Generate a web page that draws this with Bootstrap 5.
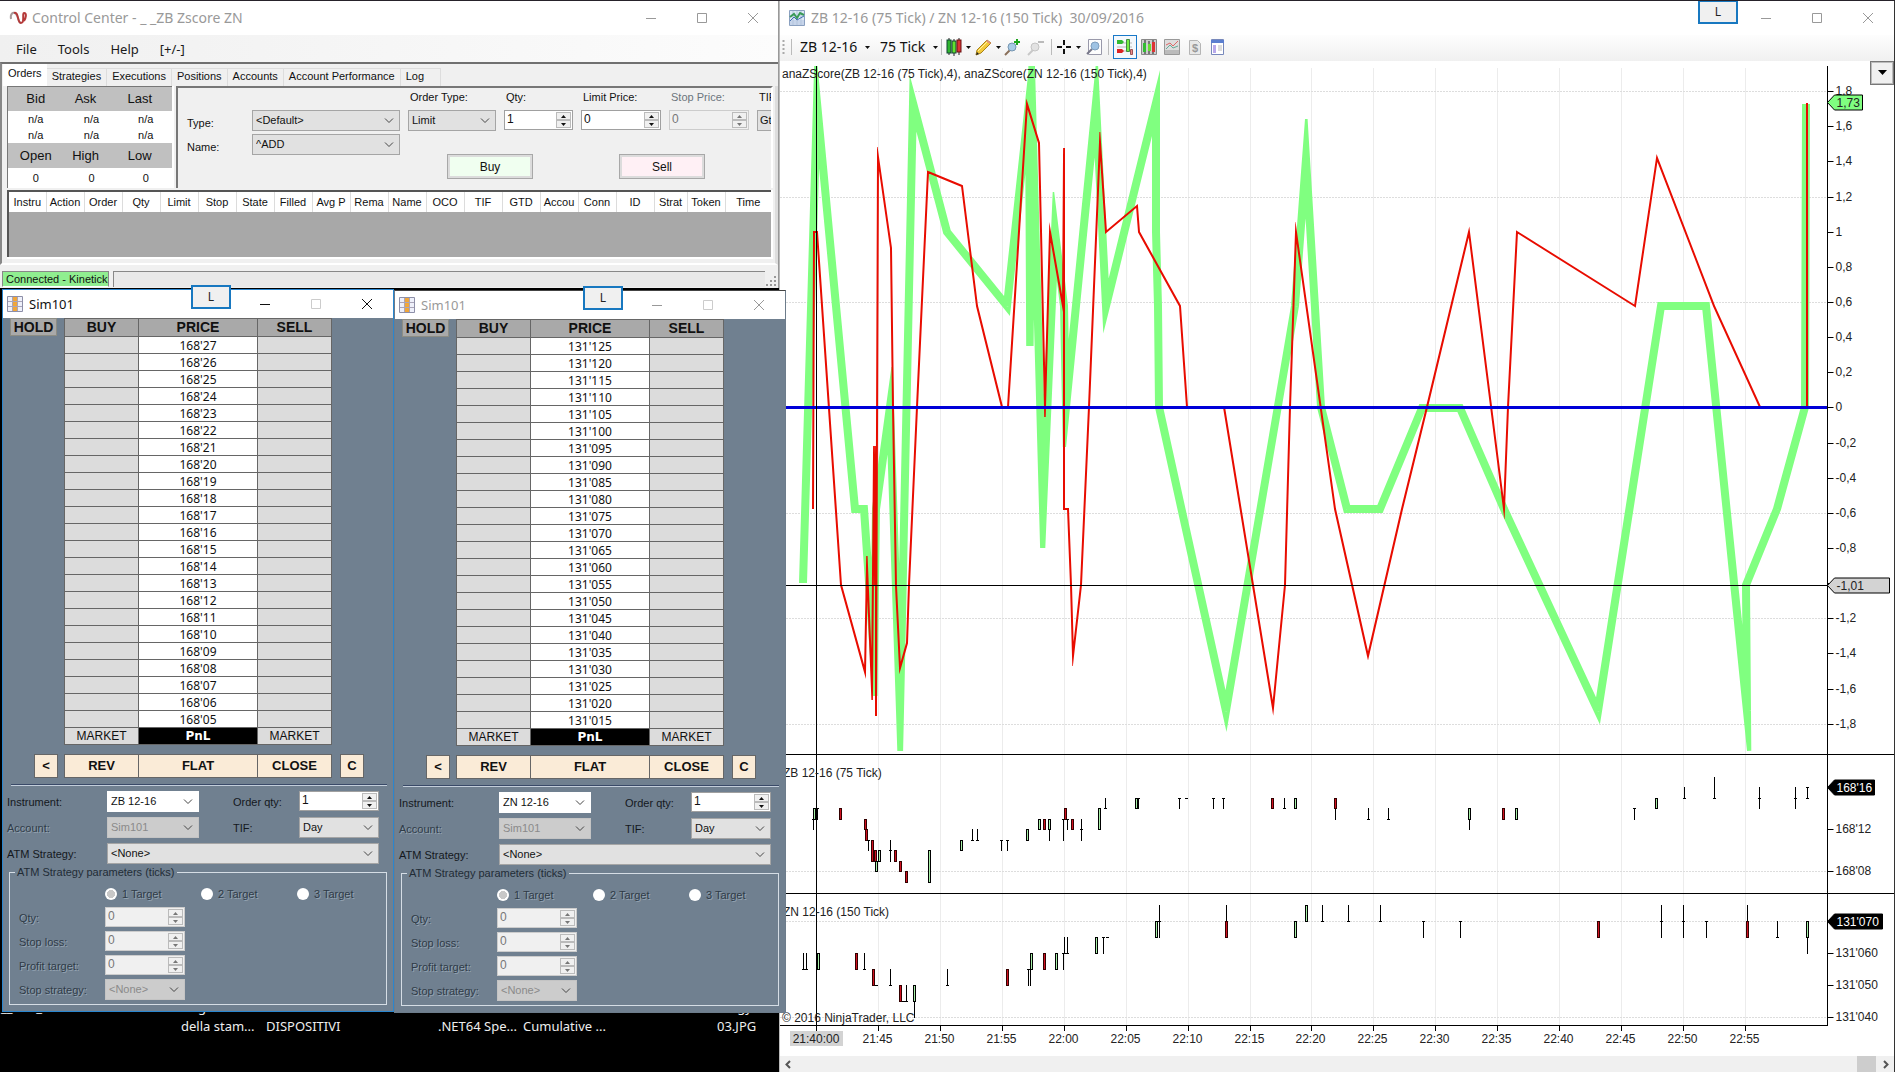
<!DOCTYPE html>
<html lang="en">
<head>
<meta charset="utf-8">
<meta name="viewport" content="width=device-width, initial-scale=1">
<title>NinjaTrader workspace</title>
<link rel="stylesheet" href="https://cdn.jsdelivr.net/npm/bootstrap@5.3.0/dist/css/bootstrap.min.css">
<style>
:root{--ui:"Liberation Sans",Arial,sans-serif;--seg:"Noto Sans","Open Sans",sans-serif}
body{font-family:var(--ui);font-size:11px;line-height:16px;color:#111;background:#000}
button,input,select{font:inherit;color:inherit}
.desktop{height:100vh;min-height:1072px;background:#000;border-top:1px solid #26222a}
.leftside{width:779px}
/* windows */
.titlebar{height:34px;font-family:var(--seg);font-size:14px;color:#999;background:#fff;padding-left:9px}
.winbtn{width:51px;height:28px;border:0;background:none;padding:0;color:#999;display:flex;align-items:center;justify-content:center}
.lchip{position:absolute;width:40px;height:24px;border:2px solid #1878c0;background:#f0f0f0;font-family:var(--seg);font-size:12px;line-height:18px;color:#222;padding:0;z-index:6}
/* control center */
.cc{background:#f0f0f0;height:287px;border-right:1px solid #999}
.menubar{height:27px;background:linear-gradient(90deg,#f0f0f0,#fcfcfc);font-family:var(--seg);font-size:13px;gap:21px;padding-left:16px}
.menubar a{color:#1a1a1a;text-decoration:none}
.cctabs{border-top:2px solid #707070;height:24px;padding-left:1px;border-left:2px solid #888;flex-wrap:nowrap}
.cctabs .nav-link{height:18px;padding:0 5px;border:1px solid #ddd;border-left:0;border-bottom:0;border-radius:0;color:#111;line-height:15px;white-space:nowrap;background:#f0f0f0;text-align:center}
.cctabs .nav-link.active{height:22px;background:#fff;line-height:18px;border:0}
.ccpage{border-left:2px solid #888;border-right:3px solid #ddd;border-bottom:2px solid #fff;padding:0 2px 4px 5px}
.quoterow{gap:2px}
.quotes{width:167px;table-layout:fixed;border:1px solid #777;border-right:2px solid #fff;border-bottom:0;background:#fff;margin:0;text-align:center}
.quotes th{background:#c0c0c0;font-weight:400;font-size:13px;height:24px;padding:0}
.quotes th+th{padding-right:12px}
.quotes td{padding:0;height:16px}
.quotes tr.lastrow td{height:20px}
.orderpane{border-left:2px solid #777;border-top:2px solid #777;border-right:2px solid #fff;height:102px;overflow:hidden;padding-left:9px;min-width:0}
.tplrow label{width:65px;padding-top:5px}
.tplrow select{width:148px}
.fld{height:21px;border:1px solid #a5a5a5;border-radius:0;background-color:#e1e1e1;padding:0 18px 0 3px;font-size:11px;line-height:17px;appearance:none;
 background-image:url("data:image/svg+xml,%3Csvg xmlns='http://www.w3.org/2000/svg' width='10' height='6'%3E%3Cpath d='M1 .5l4 4 4-4' fill='none' stroke='%23444'/%3E%3C/svg%3E");background-repeat:no-repeat;background-position:right 5px center;color:#111}
.fld.white{background-color:#fff;border-color:#fff}
.fld:disabled{background-color:#ccc;border-color:#c4c4c4;color:#8a8a8a;opacity:1}
.spin{display:flex;height:20px;border:1px solid #a0a0a0;background:#fff}
.spin input{flex:1 1 0;min-width:0;border:0;padding:0 0 2px 2px;background:none;font-size:12px;line-height:16px;outline:0}
.spin .arrows{width:16px;display:flex;flex-direction:column;padding:1px 1px 1px 0}
.spin .arrows button{flex:1 1 0;min-height:0;border:1px solid #bbb;background:#f0f0f0;padding:0;display:flex;align-items:center;justify-content:center;line-height:0}
.spin.off{background:#f0f0f0;color:#777;border-color:#ccc}
.spin input:disabled{color:#777}
.sidebtn{width:86px;height:25px;border:1px solid #a8a8a8;box-shadow:inset 0 0 0 2px #dcdcdc;padding:0;font-size:12px}
.olabel{height:16px;margin-bottom:5px;white-space:nowrap;padding-left:2px}
.ordgrid{table-layout:fixed;margin:2px 0 0;border:2px solid #555;border-right-color:#fff;border-bottom-color:#fff;width:100%}
.ordgrid th{height:21px;padding:0;background:#fff;font-weight:400;text-align:center;border-right:1px solid #dcdcdc;overflow:hidden;white-space:nowrap}
.ordgrid td{height:46px;padding:0;background:#a8a8a8}
.statusline{height:20px;margin-top:3px}
.conn{width:107px;background:#90ee90;border:1px solid #888;border-bottom-color:#fff;padding-left:3px;margin:3px 0 1px 2px;line-height:14px;white-space:nowrap}
.statrest{border-left:1px solid #888;border-top:1px solid #888;margin:3px 0 1px 4px;background:#e9e9e9}
/* DOM windows */
.domwin{position:absolute;width:392px;background:#708090;z-index:4}
.domA{left:2px;top:288px;border:1px solid #2a86cf;z-index:5}
.domB{left:394px;top:289px;border:1px solid #6d7c8b;border-top-color:#444}
.domwin .titlebar{height:28px;font-size:13px;padding:0 1px 0 4px}
.domA .titlebar,.domA .winbtn{color:#111}
.ladder{table-layout:fixed;width:268px;margin:0 0 0 19px;border-collapse:collapse;text-align:center}
.ladder th,.ladder td{border:1px solid #666;padding:0;height:17px;line-height:15px;font-size:12px}
.ladder th{background:#a9a9a9;font-size:14px;height:18px}
.ladder td{background:#dcdcdc}
.ladder td.px{background:#fff;font-family:var(--seg)}
.ladder td.pnl{background:#000;color:#fff;font-weight:700;font-family:"DejaVu Sans",sans-serif}
.holdbtn{width:47px;height:18px;background:#a9a9a9;border:1px solid #8d8d84;font-weight:700;font-size:14px;line-height:15px;padding:0}
.abtn{background:#faebd7;border:1px solid #666;font-weight:700;font-size:13px;height:24px;padding:0}
.rule{height:2px;background:#c3cedb;border-top:1px solid #3a4a68;margin:6px 6px 5px 8px}
.frow{height:21px;margin-bottom:5px}
.frow label{padding-top:3px;color:#14181d}
.domwin .fld{padding-left:3px}
.etch{color:#2f3b47!important;text-shadow:1px 1px 0 #95a4b3}
.atm{border:1px solid #d5dde5;margin:0 6px 0 6px;padding:5px 0 5px 9px;height:141px;min-width:0}
.atm legend{float:none;width:auto;margin:0 0 0 -4px;padding:0 2px;font-size:11px;line-height:16px;color:#222c36}
.prow{height:21px;margin-bottom:3px}
.prow label{width:86px;padding-top:3px}
.targets{height:17px;padding-left:86px;margin-bottom:5px}
.targets>div{width:96px;gap:5px;flex:none}
.targets input{appearance:none;width:12px;height:12px;border-radius:50%;background:#fff;margin:0}
.targets input:checked{background:radial-gradient(circle,#c8c8c8 0 4px,#fff 4px)}
/* desktop captions */
.cap{position:absolute;color:#eee;font-family:var(--seg);font-size:13px;line-height:19px;white-space:pre;z-index:1}
/* chart window */
.chartwin{background:#fff;border-left:1px solid #bbb;border-right:1px solid #333}
.chartwin .titlebar{padding-right:1px}
.chartbar{height:26px;background:linear-gradient(#fdfdfd,#f0f0f0);font-family:var(--seg);font-size:14px;color:#111;padding-bottom:2px}
.chartbar button{border:0;background:none;padding:0;display:flex;align-items:center;flex:none}
.vsep{width:1px;height:16px;background:#bbb;flex:none}
.pressed{border:1px solid #1878c8!important;background:#f4f8fc!important;width:24px;height:24px;justify-content:center}
.plot{min-height:0;overflow:hidden;background:#fff;position:relative}
#chart{display:block;position:absolute;left:0;top:0}
.plot text{font-family:var(--ui);font-size:12px;fill:#222}
.dropbtn{position:absolute;right:0;top:0;width:24px;height:24px;background:#f0f0f0;border:1px solid #777;box-shadow:inset 0 0 0 1px #bbb;padding:0 0 2px;display:flex;align-items:center;justify-content:center}
.hscroll{height:16px;background:#f0f0f0;padding:0 5px;color:#555}
.hthumb{width:19px;height:16px;background:#cdcdcd;margin-right:6px}
</style>
<script src="https://cdn.jsdelivr.net/npm/bootstrap@5.3.0/dist/js/bootstrap.bundle.min.js"></script>
</head>
<body>
<svg width="0" height="0" class="position-absolute" aria-hidden="true">
 <symbol id="i-min" viewBox="0 0 10 10"><path d="M0 5.5h10" stroke="currentColor"/></symbol>
 <symbol id="i-max" viewBox="0 0 10 10"><path d="M.5 .5h9v9h-9z" fill="none" stroke="currentColor"/></symbol>
 <symbol id="i-close" viewBox="0 0 10 10"><path d="M0 0l10 10M10 0L0 10" stroke="currentColor"/></symbol>
 <symbol id="i-up" viewBox="0 0 5 3"><path d="M2.5 0L5 3H0z" fill="currentColor"/></symbol>
 <symbol id="i-down" viewBox="0 0 5 3"><path d="M0 0h5L2.5 3z" fill="currentColor"/></symbol>
</svg>
<div class="desktop d-flex position-relative overflow-hidden">
 <div class="leftside flex-shrink-0">
  <section class="cc">
   <header class="titlebar d-flex align-items-center">
    <svg width="18" height="14" viewBox="0 0 18 14"><path d="M2 8C1 3 4 0 7 3s2 9 5 9" fill="none" stroke="#a79c9c" stroke-width="2"/><path d="M5 2c5-2 3 10 7 10s1-10 3-10c3 0 2 5 0 8" fill="none" stroke="#b53a3a" stroke-width="2"/></svg>
    <span class="flex-grow-1" style="padding-left:5px">Control Center - _ _ZB Zscore ZN</span>
    <button class="winbtn" aria-label="Minimize"><svg width="10" height="10"><use href="#i-min"/></svg></button>
    <button class="winbtn" aria-label="Maximize"><svg width="10" height="10"><use href="#i-max"/></svg></button>
    <button class="winbtn" aria-label="Close"><svg width="10" height="10"><use href="#i-close"/></svg></button>
   </header>
   <nav class="menubar d-flex align-items-center"><a href="#">File</a><a href="#">Tools</a><a href="#">Help</a><a href="#">[+/-]</a></nav>
   <ul class="nav cctabs align-items-end">
    <li><a class="nav-link active" href="#">Orders</a></li>
    <li><a class="nav-link" href="#">Strategies</a></li>
    <li><a class="nav-link" href="#">Executions</a></li>
    <li><a class="nav-link" href="#">Positions</a></li>
    <li><a class="nav-link" href="#">Accounts</a></li>
    <li><a class="nav-link" href="#">Account Performance</a></li>
    <li><a class="nav-link pe-3" href="#">Log</a></li>
   </ul>
   <div class="ccpage">
    <div class="quoterow d-flex">
     <table class="quotes flex-shrink-0">
      <tr><th style="width:56px">Bid</th><th style="width:56px">Ask</th><th>Last</th></tr>
      <tr><td>n/a</td><td>n/a</td><td>n/a</td></tr>
      <tr><td>n/a</td><td>n/a</td><td>n/a</td></tr>
      <tr><th>Open</th><th>High</th><th>Low</th></tr>
      <tr class="lastrow"><td>0</td><td>0</td><td>0</td></tr>
     </table>
     <div class="orderpane flex-grow-1 d-flex">
      <div class="tplrow flex-shrink-0" style="padding-top:22px">
       <div class="d-flex align-items-start" style="margin-bottom:3px"><label for="tplType">Type:</label><select id="tplType" class="fld"><option>&lt;Default&gt;</option></select></div>
       <div class="d-flex align-items-start"><label for="tplName">Name:</label><select id="tplName" class="fld"><option>^ADD</option></select></div>
      </div>
      <div class="flex-shrink-0 ms-2" style="width:440px;padding-top:1px">
       <div class="d-flex gap-2">
        <div style="width:88px"><label class="olabel d-block" for="otype">Order Type:</label><select id="otype" class="fld w-100"><option>Limit</option></select></div>
        <div style="width:69px"><label class="olabel d-block" for="oqty">Qty:</label><div data-spin="oqty" data-v="1"></div></div>
        <div style="width:80px"><label class="olabel d-block" for="olim">Limit Price:</label><div data-spin="olim" data-v="0"></div></div>
        <div style="width:80px"><label class="olabel d-block text-secondary" for="ostop">Stop Price:</label><div data-spin="ostop" data-v="0" data-off="1"></div></div>
        <div style="width:70px"><label class="olabel d-block" for="otif">TIF</label><select id="otif" class="fld w-100" style="padding-left:2px"><option>Gtc</option></select></div>
       </div>
       <div class="d-flex" style="padding:23px 0 0 39px;gap:86px"><button class="sidebtn" style="background:#f0fff0">Buy</button><button class="sidebtn" style="background:#fff0f5">Sell</button></div>
      </div>
     </div>
    </div>
    <table class="ordgrid"><thead><tr id="ordhead"></tr></thead><tbody><tr><td colspan="20"></td></tr></tbody></table>
   </div>
   <footer class="statusline d-flex"><span class="conn">Connected - Kinetick</span><span class="statrest flex-grow-1"></span>
    <svg width="13" height="20"><g fill="#999"><path d="M9 8h2v2H9zM9 12h2v2H9zM5 12h2v2H5zM9 16h2v2H9zM5 16h2v2H5zM1 16h2v2H1z"/></g></svg></footer>
  </section>
 </div>

 <section class="chartwin flex-grow-1 d-flex flex-column">
  <header class="titlebar d-flex align-items-center flex-shrink-0">
   <svg width="16" height="16" viewBox="0 0 16 16"><path d="M.5 .5h15v15H.5z" fill="#dce8f6" stroke="#8aa0c0"/><path d="M1 10h14v5H1z" fill="#c6d4ea"/><path d="M4 1v14M8 1v14M12 1v14" stroke="#b3c4dc"/><path d="M1 7l4-3 3 4 3-5 4 2" fill="none" stroke="#3a9a58" stroke-width="2"/><path d="M1 11l4-4 3 3 7-4" fill="none" stroke="#3f6db0"/></svg>
   <span class="flex-grow-1" style="white-space:pre;padding-left:6px">ZB 12-16 (75 Tick) / ZN 12-16 (150 Tick)  30/09/2016</span>
   <button class="winbtn" aria-label="Minimize"><svg width="10" height="10"><use href="#i-min"/></svg></button>
   <button class="winbtn" aria-label="Maximize"><svg width="10" height="10"><use href="#i-max"/></svg></button>
   <button class="winbtn" aria-label="Close"><svg width="10" height="10"><use href="#i-close"/></svg></button>
  </header>
  <nav class="chartbar d-flex align-items-center flex-shrink-0" id="bar">
   <svg width="11" height="18" class="flex-shrink-0"><path d="M3.5 2v15" stroke="#aaa" stroke-width="2" stroke-dasharray="2 2"/></svg><i class="vsep"></i>
   <button class="gap-2 ms-2" style="width:80px">ZB 12-16 <svg width="5" height="3"><use href="#i-down"/></svg></button>
   <button class="gap-2" style="width:61px">75 Tick <svg width="5" height="3"><use href="#i-down"/></svg></button><i class="vsep"></i>
   <button class="ms-1" style="width:29px;gap:4px" aria-label="Chart style"><svg width="16" height="18" viewBox="0 0 16 18"><path d="M3 0v17M8 1v17M13 0v17" stroke="#222"/><g stroke="#143"><rect x="1" y="2" width="4" height="13" fill="#2fb52f"/><rect x="6" y="3" width="4" height="12" fill="#62e02f"/><rect x="11" y="2" width="4" height="12" fill="#d33" stroke="#611"/></g></svg><svg width="5" height="3"><use href="#i-down"/></svg></button>
   <button style="width:29px;gap:4px" aria-label="Drawing tools"><svg width="17" height="17" viewBox="0 0 17 17"><path d="M1 16l1-5L12 1l4 3L6 14z" fill="#f3c93a" stroke="#a8821a"/><path d="M3 12L13 2" stroke="#fff1a0"/><path d="M1 16l1-3 2 2z" fill="#222"/><path d="M12 1l4 3-1 1-4-3z" fill="#d88"/></svg><svg width="5" height="3"><use href="#i-down"/></svg></button>
   <button style="width:23px" aria-label="Zoom in"><svg width="17" height="18" viewBox="0 0 17 18"><path d="M1 17l5-5" stroke="#8a6f5a" stroke-width="2"/><circle cx="8" cy="9" r="4" fill="#a9cbe6" stroke="#7695b0"/><path d="M13 1v6M10 4h6" stroke="#1da51d" stroke-width="2"/></svg></button>
   <button style="width:24px" aria-label="Zoom out" disabled><svg width="17" height="18" viewBox="0 0 17 18"><path d="M1 17l5-5" stroke="#c8c8c8" stroke-width="2"/><circle cx="8" cy="9" r="4" fill="#e2e2e2" stroke="#c4c4c4"/><path d="M11 4h6" stroke="#bbb" stroke-width="2"/></svg></button><i class="vsep"></i>
   <button class="ms-1" style="width:30px;gap:4px" aria-label="Cursor"><svg width="16" height="16" viewBox="0 0 16 16"><path d="M8 1v5M8 10v5M1 8h5M10 8h5" stroke="#111" stroke-width="2"/></svg><svg width="5" height="3"><use href="#i-down"/></svg></button>
   <button style="width:22px" aria-label="Zoom frame"><svg width="16" height="18" viewBox="0 0 16 18"><path d="M2.500 1.500h13v15h-13z" fill="#fdfdfd" stroke="#99a"/><path d="M1 16l5-5" stroke="#778" stroke-width="2"/><circle cx="9" cy="8" r="4" fill="#9fc3e3" stroke="#7f9fbe"/></svg></button><i class="vsep me-1"></i>
   <button class="pressed me-1" aria-label="Chart trader"><svg width="18" height="18" viewBox="0 0 18 18"><path d="M1 5h15M1 9h15M1 13h15" stroke="#bbb"/><path d="M1 2h5l2 2-2 2H1z" fill="#3b3"/><path d="M1 11h5l2 2-2 2H1z" fill="#d22"/><path d="M10.500 1.500h3v12h-3z" fill="#7e4" stroke="#484"/><path d="M14.500 11.500h2v5h-2z" fill="#e88" stroke="#955"/></svg></button>
   <button style="width:23px" aria-label="Bars"><svg width="16" height="16" viewBox="0 0 16 16"><path d="M.5 .5h15v15H.5z" fill="#ccc" stroke="#888"/><path d="M4 1v14M8 2v13M12 1v14" stroke="#222"/><rect x="2" y="4" width="3" height="9" fill="#3b3"/><rect x="7" y="5" width="3" height="7" fill="#6d3"/><rect x="11" y="3" width="3" height="10" fill="#d33"/></svg></button>
   <button style="width:23px" aria-label="Indicators"><svg width="16" height="16" viewBox="0 0 16 16"><path d="M.5 .5h15v15H.5z" fill="#ddd" stroke="#999"/><path d="M1 11h14v4H1z" fill="#bbb"/><path d="M2 6l4-2 3 3 5-5" fill="none" stroke="#d66"/><path d="M2 10l4-4 3 3 5-2" fill="none" stroke="#6a9"/></svg></button>
   <button style="width:23px" aria-label="Strategies" disabled><svg width="16" height="16" viewBox="0 0 16 16"><path d="M2.500 1.500h8l3 3v11h-11z" fill="#e8e8e8" stroke="#b5b5b5"/><text x="5" y="13" font-size="11" font-weight="700" fill="#999" font-family="Liberation Sans">$</text></svg></button>
   <button aria-label="Properties"><svg width="15" height="16" viewBox="0 0 15 16"><path d="M1.500 .5h12v15h-12z" fill="#fff" stroke="#78b"/><path d="M1 1h13v3H1z" fill="#5b7fd0"/><path d="M3 6h3v8H3z" fill="#b9a9ec"/><path d="M8 7h4M8 9h4M8 11h4" stroke="#bbb"/></svg></button>
  </nav>
  <div class="plot flex-grow-1" id="plot"><svg id="chart" role="img" aria-label="Z-score chart"></svg>
   <button class="dropbtn" aria-label="Panel menu"><svg width="9" height="5"><path d="M0 0h9L4.500 5z" fill="#000"/></svg></button></div>
  <div class="hscroll d-flex align-items-center flex-shrink-0"><svg width="7" height="9" class="me-auto"><path d="M5 1L1.500 4.500 5 8" fill="none" stroke="#555" stroke-width="2"/></svg><span class="hthumb"></span><svg width="7" height="9"><path d="M2 1l3.500 3.500L2 8" fill="none" stroke="#555" stroke-width="2"/></svg></div>
 </section>

 <section class="domwin domA" data-sym="ZB 12-16" data-id="a"></section>
 <section class="domwin domB" data-sym="ZN 12-16" data-id="b"></section>
 <button class="lchip" style="left:191px;top:284px">L</button>
 <button class="lchip" style="left:583px;top:285px">L</button>
 <button class="lchip" style="right:157px;top:-1px">L</button>

 <span class="cap" style="left:1px;top:997px">__       _</span>
 <span class="cap" style="left:181px;top:997px">     g
della stam...</span>
 <span class="cap" style="left:266px;top:1016px">DISPOSITIVI</span>
 <span class="cap" style="left:438px;top:1016px">.NET64 Spe...</span>
 <span class="cap" style="left:523px;top:1016px">Cumulative ...</span>
 <span class="cap" style="left:717px;top:997px">      gy
03.JPG</span>
</div>

<script>
// spin boxes
const spin=(id,v,off,cls='')=>`<div class="spin ${off?'off':''} ${cls}"><input type="text" id="${id}" value="${v}" ${off?'disabled':''}><span class="arrows"><button tabindex="-1" aria-label="Up"><svg width="5" height="3"><use href="#i-up"/></svg></button><button tabindex="-1" aria-label="Down"><svg width="5" height="3"><use href="#i-down"/></svg></button></span></div>`;
document.querySelectorAll('[data-spin]').forEach(e=>e.innerHTML=spin(e.dataset.spin,e.dataset.v,e.dataset.off));

// order grid header
const cols='Instru Action Order Qty Limit Stop State Filled Avg_P Rema Name OCO TIF GTD Accou Conn ID Strat Token Time'.split(' ');
document.getElementById('ordhead').innerHTML=cols.map(c=>`<th${c=='Strat'?' style="width:33px"':c=='Time'?'':' style="width:38px"'}>${c.replace('_',' ')}</th>`).join('');

// price ladders
const prices={a:i=>"168'"+String(27-i).padStart(2,'0'),b:i=>"131'"+String(125-5*i).padStart(3,'0')};
document.querySelectorAll('.domwin').forEach(w=>{
 const k=w.dataset.id;let rows='';
 for(let i=0;i<23;i++)rows+=`<tr><td></td><td class="px">${prices[k](i)}</td><td></td></tr>`;
 w.innerHTML=`<header class="titlebar d-flex align-items-center">
 <svg width="16" height="16" viewBox="0 0 16 16"><path d="M.5 .5h15v15H.5z" fill="#eef0fa" stroke="#8d8fa8"/><path d="M5 1h6v14H5z" fill="#f0a63a"/><path d="M1 5.500h14M1 10.500h14M5.500 1v14M10.500 1v14" stroke="#a9a4b8"/></svg>
 <span class="flex-grow-1" style="padding-left:6px">Sim101</span>
 <button class="winbtn" aria-label="Minimize"><svg width="10" height="10"><use href="#i-min"/></svg></button>
 <button class="winbtn" aria-label="Maximize" style="color:#ccc"><svg width="10" height="10"><use href="#i-max"/></svg></button>
 <button class="winbtn" aria-label="Close"><svg width="10" height="10"><use href="#i-close"/></svg></button></header>
 <div class="d-flex align-items-start" style="padding-left:7px"><button class="holdbtn" style="margin-right:-12px">HOLD</button>
 <table class="ladder"><thead><tr><th style="width:74px">BUY</th><th>PRICE</th><th style="width:74px">SELL</th></tr></thead><tbody>${rows}
 <tr><td>MARKET</td><td class="pnl">PnL</td><td>MARKET</td></tr></tbody></table></div>
 <div class="d-flex" style="padding:9px 0 0 31px"><button class="abtn" style="width:24px;margin-right:6px">&lt;</button><button class="abtn border-end-0" style="width:74px">REV</button><button class="abtn border-end-0" style="width:119px">FLAT</button><button class="abtn" style="width:75px">CLOSE</button><button class="abtn" style="width:24px;margin-left:8px">C</button></div>
 <div class="rule"></div>
 <div class="ps-1">
 <div class="frow d-flex"><label style="width:100px" for="ins${k}">Instrument:</label><select id="ins${k}" class="fld white" style="width:92px"><option>${w.dataset.sym}</option></select><label style="width:100px;padding-left:34px" for="oq${k}">Order qty:</label><div style="width:80px">${spin('oq'+k,1,0)}</div></div>
 <div class="frow d-flex"><label class="etch" style="width:100px" for="acc${k}">Account:</label><select id="acc${k}" class="fld" disabled style="width:92px"><option>Sim101</option></select><label style="width:100px;padding-left:34px" for="tif${k}">TIF:</label><select id="tif${k}" class="fld" style="width:80px"><option>Day</option></select></div>
 <div class="frow d-flex mb-0"><label style="width:100px" for="atm${k}">ATM Strategy:</label><select id="atm${k}" class="fld" style="width:272px"><option>&lt;None&gt;</option></select></div>
 </div>
 <fieldset class="atm"><legend>ATM Strategy parameters (ticks)</legend>
 <div class="targets d-flex">${[1,2,3].map(n=>`<div class="d-flex align-items-center"><input type="radio" name="t${k}" id="t${k}${n}" disabled ${n==1?'checked':''}><label class="etch" for="t${k}${n}">${n} Target</label></div>`).join('')}</div>
 ${['Qty','Stop loss','Profit target'].map((t,i)=>`<div class="prow d-flex"><label class="etch" for="p${k}${i}">${t}:</label><div style="width:80px">${spin('p'+k+i,0,1)}</div></div>`).join('')}
 <div class="prow d-flex mb-0"><label class="etch" for="ss${k}">Stop strategy:</label><select id="ss${k}" class="fld" disabled style="width:80px"><option>&lt;None&gt;</option></select></div>
 </fieldset><div style="height:6px"></div>`;
});

// chart data: workspace pixels at the base window size, rescaled in draw()
const green=[[803,583],[817,103],[855,509],[864,509],[874,656],[876,509],[890,407],[900,711],[913,103],[947,232],[1007,306],[1029,103],[1030,306],[1032,103],[1043,508],[1055,232],[1064,306],[1066,407],[1096,103],[1106,306],[1156,103],[1156,232],[1158,306],[1159,407],[1226,711],[1295,306],[1306,159],[1321,407],[1347,509],[1380,509],[1422,408],[1460,408],[1504,509],[1598,711],[1661,306],[1706,306],[1747,711],[1746,585],[1777,509],[1805,407],[1806,104]];
const red=[[813,509],[814,232],[817,232],[841,585],[865,672],[867,566],[872,690],[874,456],[875,575],[876,456],[876,706],[878,157],[891,248],[893,407],[896,586],[900,668],[907,643],[909,585],[917,407],[928,172],[962,186],[977,306],[1002,407],[1008,407],[1027,104],[1039,143],[1045,407],[1050,232],[1063,306],[1064,158],[1064,509],[1068,509],[1071,585],[1073,656],[1081,585],[1089,407],[1100,142],[1106,232],[1137,206],[1139,232],[1180,306],[1187,407],[1224,407],[1273,708],[1285,585],[1290,407],[1296,232],[1335,509],[1368,656],[1402,509],[1427,407],[1469,232],[1504,509],[1508,407],[1517,232],[1635,306],[1657,158],[1714,306],[1760,407],[1807,407],[1807,103]];
// [x, open, close, low, high]
const zb=[[813,13,13,12,13],[814,13,14],[817,14,14,13,14],[840,14,13],[865,13,12],[866,12,11],[868,11,11,10,11],[872,11,9],[875,10,9],[876,8,9],[879,9,10],[890,10,10,9,11],[895,10,9],[900,9,8],[906,8,7],[929,7,10],[961,10,11],[972,11,11,11,12],[977,11,11,11,12],[1001,11,11,10,11],[1007,11,11,10,11],[1027,11,12],[1039,12,13],[1044,13,12],[1049,12,13,11,13],[1063,13,13,11,13],[1065,14,13],[1067,13,13,12,13],[1072,13,12],[1081,12,12,11,13],[1099,12,14],[1105,14,14,14,15],[1136,14,15],[1138,15,15,14,15],[1179,15,15,14,15],[1186,15,15],[1213,15,15,14,15],[1223,15,15,14,15],[1272,15,14],[1284,14,14,14,15],[1295,14,15],[1335,15,14,13,15],[1368,13,13,13,14],[1388,13,13,13,14],[1469,13,14,12,14],[1503,14,13],[1516,13,14],[1634,14,14,13,14],[1656,14,15],[1684,15,15,15,16],[1714,15,15,15,17],[1759,15,15,14,16],[1795,15,15,14,16],[1807,15,15,15,16],[1807,16,16]];
const zn=[[803,3,3,3,4],[806,3,3,3,4],[818,3,4],[856,4,3],[864,3,3,3,4],[873,3,2],[876,2,2],[890,2,2,2,3],[900,2,1],[903,1,1],[906,1,1,1,2],[914,1,2,0,2],[947,2,2,2,3],[1007,3,2],[1028,3,3,2,3],[1030,3,3,2,3],[1031,3,4],[1044,4,3],[1056,3,4],[1063,4,4,3,4],[1064,4,4,4,5],[1067,4,4,4,5],[1096,4,5],[1103,5,5,4,5],[1107,5,5],[1156,5,6],[1159,6,6,5,7],[1226,6,5,5,7],[1295,5,6],[1306,6,7],[1322,6,6,6,7],[1348,6,6,6,7],[1380,6,6,6,7],[1423,6,6,5,6],[1460,6,6,5,6],[1598,6,5],[1661,6,6,5,7],[1683,6,6,5,7],[1706,6,6,5,6],[1747,6,5,5,7],[1777,5,5,5,6],[1807,5,6,4,6]];

// outline of a polyline whose long miters are cut flat at 10 half-widths
function thick(pts,hw){
 const lim=hw*10,out=[];
 const add=p=>{let a=0;p.forEach((q,i)=>{const r=p[(i+1)%p.length];a+=q[0]*r[1]-r[0]*q[1]});if(a<0)p.reverse();out.push('M'+p.map(q=>q[0].toFixed(1)+' '+q[1].toFixed(1)).join('L')+'Z')};
 const dir=(a,b)=>{const l=Math.hypot(b[0]-a[0],b[1]-a[1])||1;return[(b[0]-a[0])/l,(b[1]-a[1])/l]};
 for(let i=0;i<pts.length-1;i++){const a=pts[i],b=pts[i+1],d=dir(a,b),n=[-d[1]*hw,d[0]*hw];
  add([[a[0]+n[0],a[1]+n[1]],[b[0]+n[0],b[1]+n[1]],[b[0]-n[0],b[1]-n[1]],[a[0]-n[0],a[1]-n[1]]]);
  if(i<pts.length-2){const c=pts[i+2],e=dir(b,c),cr=d[0]*e[1]-d[1]*e[0];if(Math.abs(cr)<.001)continue;
   const s=cr>0?-1:1,o1=[b[0]-d[1]*hw*s,b[1]+d[0]*hw*s],o2=[b[0]-e[1]*hw*s,b[1]+e[0]*hw*s];
   let m=[d[0]-e[0],d[1]-e[1]];const ml=Math.hypot(m[0],m[1]);m=[m[0]/ml,m[1]/ml];
   const len=hw/(Math.sqrt((1+d[0]*e[0]+d[1]*e[1])/2)||1e-6);
   if(len<=lim)add([b,o1,[b[0]+m[0]*len,b[1]+m[1]*len],o2]);
   else{const p1=(o1[0]-b[0])*m[0]+(o1[1]-b[1])*m[1],t=lim-p1,f=t/(m[0]*d[0]+m[1]*d[1]);
    add([b,o1,[o1[0]+d[0]*f,o1[1]+d[1]*f],[o2[0]-e[0]*f,o2[1]-e[1]*f],o2]);}
  }}
 return out.join('');
}
function draw(){
 const box=document.getElementById('plot'),W=box.clientWidth,H=box.clientHeight,svg=document.getElementById('chart');
 svg.setAttribute('width',W);svg.setAttribute('height',H);
 const kx=(W-67)/1047,ky=H/995,X=x=>Math.round((x-780)*kx),Y=y=>Math.round((y-61)*ky);
 const ax=X(1827)+.5,V=v=>Y(407.4-v*175.7),B=v=>Y(871.3-(v-8)*10.5),N=v=>Y(1017.4-v*16.03);
 let s=`<defs><clipPath id="c1"><rect x="0" y="${Y(66)}" width="${ax}" height="${Y(754)-Y(66)}"/></clipPath></defs>`;
 const ln=(a,b,c,d,st)=>s+=`<path d="M${a} ${b}L${c} ${d}" ${st}/>`;
 const tx=(x,y,t,e='')=>s+=`<text x="${x}" y="${y}" ${e}>${t}</text>`;
 const g='stroke="#ddd" stroke-dasharray="2 1"',k='stroke="#000"';
 for(let i=1;i<16;i++)ln(X(816+i*61.93)+.5,Y(68),X(816+i*61.93)+.5,Y(1025),'stroke="#ececec"');
 [1.8,1.2,.6,-.6,-1.2,-1.8].forEach(v=>ln(0,V(v)+.5,ax,V(v)+.5,g));
 ln(0,B(8)+.5,ax,B(8)+.5,g);[0,6].forEach(v=>ln(0,N(v)+.5,ax,N(v)+.5,g));
 const P=a=>a.map(p=>[(p[0]-780)*kx,(p[1]-61)*ky]);
 s+=`<g clip-path="url(#c1)"><path d="${thick(P(green),4)}" fill="#80ff80"/><path d="${thick(P(red),1)}" fill="#e80c00"/></g>`;
 ln(0,Y(407)+.5,ax,Y(407)+.5,'stroke="#0000d8" stroke-width="3"');
 const cand=(d,F)=>d.forEach(([x,o,c,l,h])=>{x=X(x)+.5;
  if(l!==undefined)ln(x,F(h),x,F(l)+1,k);
  if(o===c)ln(x-1.5,F(o)+.5,x+1.5,F(o)+.5,k);
  else s+=`<rect x="${x-1}" y="${F(Math.max(o,c))+.5}" width="2" height="${F(Math.min(o,c))-F(Math.max(o,c))}" fill="${c>o?'#a8f0a8':'#d01020'}" stroke="${c>o?'#000':'#300'}"/>`;});
 cand(zb,B);cand(zn,N);
 ln(0,Y(585)+.5,ax,Y(585)+.5,k);ln(X(816)+.5,Y(66),X(816)+.5,Y(1031),k);
 [754,893].forEach(y=>ln(0,Y(y)+.5,W,Y(y)+.5,k));
 ln(0,Y(1025)+.5,ax,Y(1025)+.5,k);ln(ax,Y(66),ax,Y(1025)+1,k);
 for(let i=9;i>=-9;i--){const v=i/5,y=V(v);ln(ax,y+.5,ax+6,y+.5,k);if(i!=-5)tx(ax+8,y+4,String(v).replace('.',','));}
 [[B,12,"168'12"],[B,8,"168'08"],[N,4,"131'060"],[N,2,"131'050"],[N,0,"131'040"]].forEach(([F,v,t])=>{ln(ax,F(v)+.5,ax+6,F(v)+.5,k);tx(ax+8,F(v)+4,t)});
 const tag=(y,w,t,f,c)=>{s+=`<path d="M${ax} ${y+.5}l7 -7.500h${w}v15h-${w}z" fill="${f}" stroke="#000"/>`;tx(ax+9,y+5,t,`style="fill:${c}"`)};
 tag(V(1.74),28,'1,73','#80ff80','#222');tag(Y(585),55,'-1,01','#d3d3d3','#222');
 tag(B(16),40,"168'16",'#000','#fff');tag(N(6),48,"131'070",'#000','#fff');
 const t0=21*60+40;
 for(let i=1;i<16;i++){const x=X(816+i*61.93)+.5,m=t0+5*i;ln(x,Y(1025),x,Y(1031),k);tx(x-1,Y(1043),`${Math.floor(m/60)}:${String(m%60).padStart(2,'0')}`,'text-anchor="middle"');}
 s+=`<rect x="${X(790)}" y="${Y(1031)}" width="53" height="15" fill="#d3d3d3"/>`;tx(X(816),Y(1043),'21:40:00','text-anchor="middle"');
 tx(X(782),Y(78),'anaZScore(ZB 12-16 (75 Tick),4), anaZScore(ZN 12-16 (150 Tick),4)');
 tx(X(783),Y(777),'ZB 12-16 (75 Tick)');tx(X(783),Y(916),'ZN 12-16 (150 Tick)');tx(X(782),Y(1022),'© 2016 NinjaTrader, LLC');
 svg.innerHTML=s;
}
draw();addEventListener('resize',draw);
</script>
</body>
</html>
